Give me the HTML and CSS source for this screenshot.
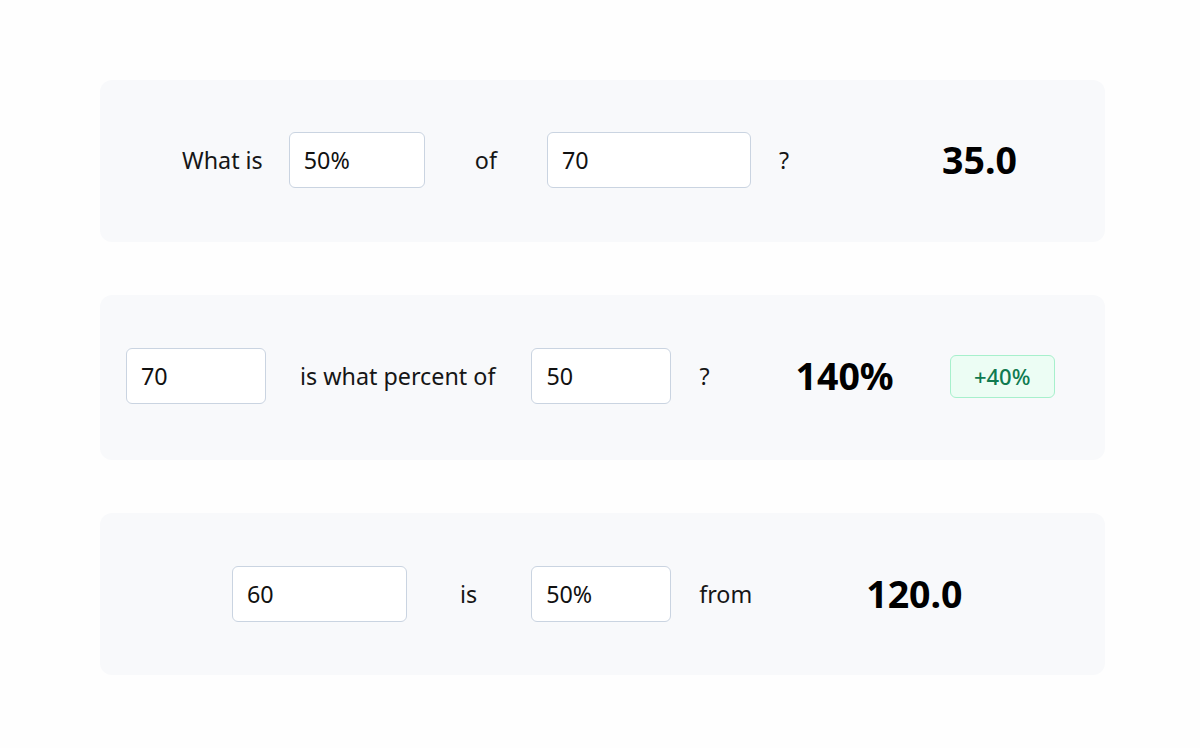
FILE: index.html
```html
<!DOCTYPE html>
<html lang="en">
<head>
<meta charset="utf-8">
<title>Percentage calculator</title>
<link rel="stylesheet" href="styles.css">
</head>
<body>
<main class="page">
  <section class="card card-one">
    <span class="label">What is</span>
    <input class="field w136 ml26" type="text" value="50%">
    <span class="label ml50">of</span>
    <input class="field w204 ml50" type="text" value="70">
    <span class="label ml28">?</span>
    <span class="result ml153">35.0</span>
  </section>

  <section class="card card-two">
    <input class="field w140" type="text" value="70">
    <span class="label ml34">is what percent of</span>
    <input class="field w140 ml36" type="text" value="50">
    <span class="label ml28">?</span>
    <span class="result ml86">140%</span>
    <span class="badge ml56">+40%</span>
  </section>

  <section class="card card-three">
    <input class="field w175" type="text" value="60">
    <span class="label ml53">is</span>
    <input class="field w140 ml54" type="text" value="50%">
    <span class="label ml28">from</span>
    <span class="result ml114">120.0</span>
  </section>
</main>
</body>
</html>
```
FILE: styles.css
```css
* { box-sizing: border-box; }

html, body {
  margin: 0;
  padding: 0;
  background: #fefefe;
}

body {
  font-family: "Noto Sans", "Open Sans", sans-serif;
  color: #141414;
}

.page {
  width: 1005px;
  margin-left: 100px;
  padding-top: 80px;
  display: flex;
  flex-direction: column;
}

.card {
  display: flex;
  align-items: center;
  background: #f8f9fb;
  border-radius: 12px;
}

.card-one { padding: 52px 0 54px 82px; }
.card-two { padding: 53px 0 56px 26px; margin-top: 53px; }
.card-three { padding: 53px 0 53px 132px; margin-top: 53px; }

.label {
  font-size: 23.3px;
  line-height: 32px;
  color: #161616;
  white-space: nowrap;
}

.field {
  height: 56px;
  padding: 0 14px;
  border: 1.5px solid #cad4e1;
  border-radius: 6px;
  background: #ffffff;
  font-family: "Noto Sans", "Open Sans", sans-serif;
  font-size: 23.3px;
  color: #111111;
  outline: none;
}

.result {
  font-size: 37.5px;
  font-weight: 700;
  line-height: 46px;
  color: #000000;
  white-space: nowrap;
}

.badge {
  display: flex;
  align-items: center;
  justify-content: center;
  width: 105px;
  height: 43px;
  border: 1.5px solid #a7f0cc;
  border-radius: 6px;
  background: #ecfdf4;
  color: #0f7a50;
  font-size: 22px;
  font-weight: 500;
}

.w136 { width: 136px; }
.w140 { width: 140px; }
.w175 { width: 175px; }
.w204 { width: 204px; }

.ml26 { margin-left: 26px; }
.ml28 { margin-left: 28px; }
.ml34 { margin-left: 34px; }
.ml36 { margin-left: 36px; }
.ml50 { margin-left: 50px; }
.ml53 { margin-left: 53px; }
.ml54 { margin-left: 54px; }
.ml56 { margin-left: 56px; }
.ml86 { margin-left: 86px; }
.ml114 { margin-left: 114px; }
.ml153 { margin-left: 153px; }
```
